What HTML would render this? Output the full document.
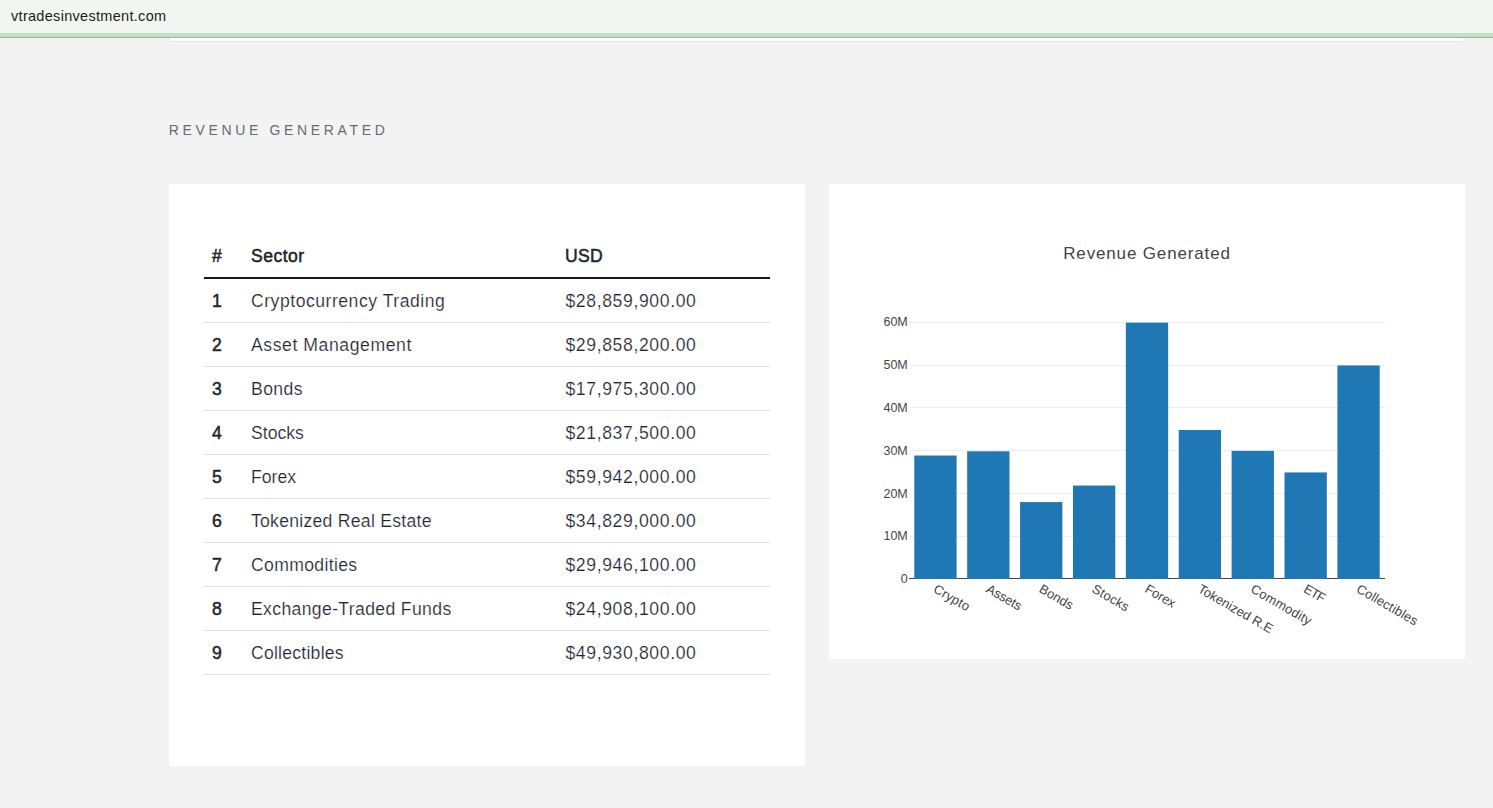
<!DOCTYPE html>
<html lang="en">
<head>
<meta charset="utf-8">
<title>vtradesinvestment.com</title>
<style>
  html, body { margin: 0; padding: 0; }
  body {
    width: 1493px; height: 808px; overflow: hidden; position: relative;
    background: #f3f3f3;
    font-family: "Liberation Sans", sans-serif;
    color: #343a40;
  }
  .abs { position: absolute; }
  /* top url bar */
  #bar { left: 0; top: 0; width: 1493px; height: 33px; background: #f1f7f0; }
  #bar-green { left: 0; top: 33px; width: 1493px; height: 4px; background: #c3e0c3; }
  #bar-line { left: 0; top: 37px; width: 1493px; height: 1px; background: #9bb49b; }
  #url { left: 11px; top: 7px; font-size: 14.5px; letter-spacing: 0.3px; line-height: 18px; color: #1c1c1c; white-space: nowrap; }
  /* previous card remnant */
  #prev { left: 169px; top: 34px; width: 1294px; height: 6px; background: #fff; border: 1px solid #e0e3ec; border-radius: 3px; }
  /* heading */
  #heading { left: 168.7px; top: 121px; font-size: 14px; line-height: 18px; letter-spacing: 3.65px; color: #646b79; white-space: nowrap; }
  /* cards */
  #card1 { left: 169px; top: 184px; width: 636px; height: 582px; background: #fff; }
  #card2 { left: 829px; top: 184px; width: 636px; height: 475px; background: #fff; }
  /* table */
  .hline { left: 204px; width: 566px; height: 1px; background: #dee2e6; }
  .t { white-space: nowrap; font-size: 17.6px; line-height: 20px; letter-spacing: 0.58px; -webkit-text-stroke: 0.2px #fff; color: #20232f; }
  .b { font-weight: normal; color: #212529; letter-spacing: 0; -webkit-text-stroke: 0.5px #212529; }
</style>
</head>
<body>
  <div id="bar" class="abs"></div>
  <div id="prev" class="abs"></div>
  <div id="bar-green" class="abs"></div>
  <div id="bar-line" class="abs"></div>
  <div id="url" class="abs">vtradesinvestment.com</div>

  <div id="heading" class="abs">REVENUE GENERATED</div>

  <div id="card1" class="abs"></div>
  <div id="card2" class="abs"></div>

  <!-- TABLE -->
  <div class="abs t b" style="left:212px;top:246px">#</div>
  <div class="abs t b" style="left:251px;top:246px;letter-spacing:0.45px">Sector</div>
  <div class="abs t b" style="left:565px;top:246px;letter-spacing:0.3px">USD</div>
  <div class="abs" style="left:204px;top:277px;width:566px;height:2px;background:#16181b"></div>
  <div class="abs t b" style="left:212px;top:291px">1</div>
  <div class="abs t" style="left:251px;top:291px;letter-spacing:0.52px">Cryptocurrency Trading</div>
  <div class="abs t" style="left:565.4px;top:291px;letter-spacing:0.63px">$28,859,900.00</div>
  <div class="abs hline" style="top:322px"></div>
  <div class="abs t b" style="left:212px;top:335px">2</div>
  <div class="abs t" style="left:251px;top:335px;letter-spacing:0.58px">Asset Management</div>
  <div class="abs t" style="left:565.4px;top:335px;letter-spacing:0.63px">$29,858,200.00</div>
  <div class="abs hline" style="top:366px"></div>
  <div class="abs t b" style="left:212px;top:379px">3</div>
  <div class="abs t" style="left:251px;top:379px;letter-spacing:0.4px">Bonds</div>
  <div class="abs t" style="left:565.4px;top:379px;letter-spacing:0.63px">$17,975,300.00</div>
  <div class="abs hline" style="top:410px"></div>
  <div class="abs t b" style="left:212px;top:423px">4</div>
  <div class="abs t" style="left:251px;top:423px;letter-spacing:0.02px">Stocks</div>
  <div class="abs t" style="left:565.4px;top:423px;letter-spacing:0.63px">$21,837,500.00</div>
  <div class="abs hline" style="top:454px"></div>
  <div class="abs t b" style="left:212px;top:467px">5</div>
  <div class="abs t" style="left:251px;top:467px;letter-spacing:0.03px">Forex</div>
  <div class="abs t" style="left:565.4px;top:467px;letter-spacing:0.63px">$59,942,000.00</div>
  <div class="abs hline" style="top:498px"></div>
  <div class="abs t b" style="left:212px;top:511px">6</div>
  <div class="abs t" style="left:251px;top:511px;letter-spacing:0.27px">Tokenized Real Estate</div>
  <div class="abs t" style="left:565.4px;top:511px;letter-spacing:0.63px">$34,829,000.00</div>
  <div class="abs hline" style="top:542px"></div>
  <div class="abs t b" style="left:212px;top:555px">7</div>
  <div class="abs t" style="left:251px;top:555px;letter-spacing:0.34px">Commodities</div>
  <div class="abs t" style="left:565.4px;top:555px;letter-spacing:0.63px">$29,946,100.00</div>
  <div class="abs hline" style="top:586px"></div>
  <div class="abs t b" style="left:212px;top:599px">8</div>
  <div class="abs t" style="left:251px;top:599px;letter-spacing:0.36px">Exchange-Traded Funds</div>
  <div class="abs t" style="left:565.4px;top:599px;letter-spacing:0.63px">$24,908,100.00</div>
  <div class="abs hline" style="top:630px"></div>
  <div class="abs t b" style="left:212px;top:643px">9</div>
  <div class="abs t" style="left:251px;top:643px;letter-spacing:0.24px">Collectibles</div>
  <div class="abs t" style="left:565.4px;top:643px;letter-spacing:0.63px">$49,930,800.00</div>
  <div class="abs hline" style="top:674px"></div>
  <!-- /TABLE -->
  <!-- CHART -->
  <svg class="abs" style="left:829px;top:184px" width="636" height="475" viewBox="0 0 636 475" font-family="'Liberation Sans', sans-serif">
    <rect x="80" y="352" width="476" height="1" fill="#eeeeee"/>
    <rect x="80" y="309" width="476" height="1" fill="#eeeeee"/>
    <rect x="80" y="266" width="476" height="1" fill="#eeeeee"/>
    <rect x="80" y="223" width="476" height="1" fill="#eeeeee"/>
    <rect x="80" y="181" width="476" height="1" fill="#eeeeee"/>
    <rect x="80" y="138" width="476" height="1" fill="#eeeeee"/>
    <rect x="80" y="394" width="476" height="1" fill="#444444"/>
    <rect x="85.29" y="271.52" width="42.31" height="123.48" fill="#1f77b4"/>
    <rect x="138.18" y="267.26" width="42.31" height="127.74" fill="#1f77b4"/>
    <rect x="191.07" y="318.06" width="42.31" height="76.94" fill="#1f77b4"/>
    <rect x="243.96" y="301.54" width="42.31" height="93.46" fill="#1f77b4"/>
    <rect x="296.84" y="138.65" width="42.31" height="256.35" fill="#1f77b4"/>
    <rect x="349.73" y="246.01" width="42.31" height="148.99" fill="#1f77b4"/>
    <rect x="402.62" y="266.88" width="42.31" height="128.12" fill="#1f77b4"/>
    <rect x="455.51" y="288.42" width="42.31" height="106.58" fill="#1f77b4"/>
    <rect x="508.40" y="181.45" width="42.31" height="213.55" fill="#1f77b4"/>
    <text x="78.8" y="399.00" text-anchor="end" font-size="12.5" fill="#444444">0</text>
    <text x="78.8" y="356.00" text-anchor="end" font-size="12.5" fill="#444444">10M</text>
    <text x="78.8" y="314.00" text-anchor="end" font-size="12.5" fill="#444444">20M</text>
    <text x="78.8" y="271.00" text-anchor="end" font-size="12.5" fill="#444444">30M</text>
    <text x="78.8" y="228.00" text-anchor="end" font-size="12.5" fill="#444444">40M</text>
    <text x="78.8" y="185.00" text-anchor="end" font-size="12.5" fill="#444444">50M</text>
    <text x="78.8" y="142.00" text-anchor="end" font-size="12.5" fill="#444444">60M</text>
    <text x="106.44" y="408.40" transform="rotate(30 106.44 402.40)" font-size="13" letter-spacing="0.25" fill="#444444">Crypto</text>
    <text x="159.33" y="408.40" transform="rotate(30 159.33 402.40)" font-size="13" letter-spacing="-0.12" fill="#444444">Assets</text>
    <text x="212.22" y="408.40" transform="rotate(30 212.22 402.40)" font-size="13" letter-spacing="0.02" fill="#444444">Bonds</text>
    <text x="265.11" y="408.40" transform="rotate(30 265.11 402.40)" font-size="13" letter-spacing="0.25" fill="#444444">Stocks</text>
    <text x="318.00" y="408.40" transform="rotate(30 318.00 402.40)" font-size="13" letter-spacing="-0.09" fill="#444444">Forex</text>
    <text x="370.89" y="408.40" transform="rotate(30 370.89 402.40)" font-size="13" letter-spacing="0.03" fill="#444444">Tokenized R.E</text>
    <text x="423.78" y="408.40" transform="rotate(30 423.78 402.40)" font-size="13" letter-spacing="0.25" fill="#444444">Commodity</text>
    <text x="476.67" y="408.40" transform="rotate(30 476.67 402.40)" font-size="13" letter-spacing="-0.85" fill="#444444">ETF</text>
    <text x="529.56" y="408.40" transform="rotate(30 529.56 402.40)" font-size="13" letter-spacing="0.15" fill="#444444">Collectibles</text>
    <text x="318" y="74.5" text-anchor="middle" font-size="17" letter-spacing="0.85" fill="#444444">Revenue Generated</text>
  </svg>
  <!-- /CHART -->
</body>
</html>
